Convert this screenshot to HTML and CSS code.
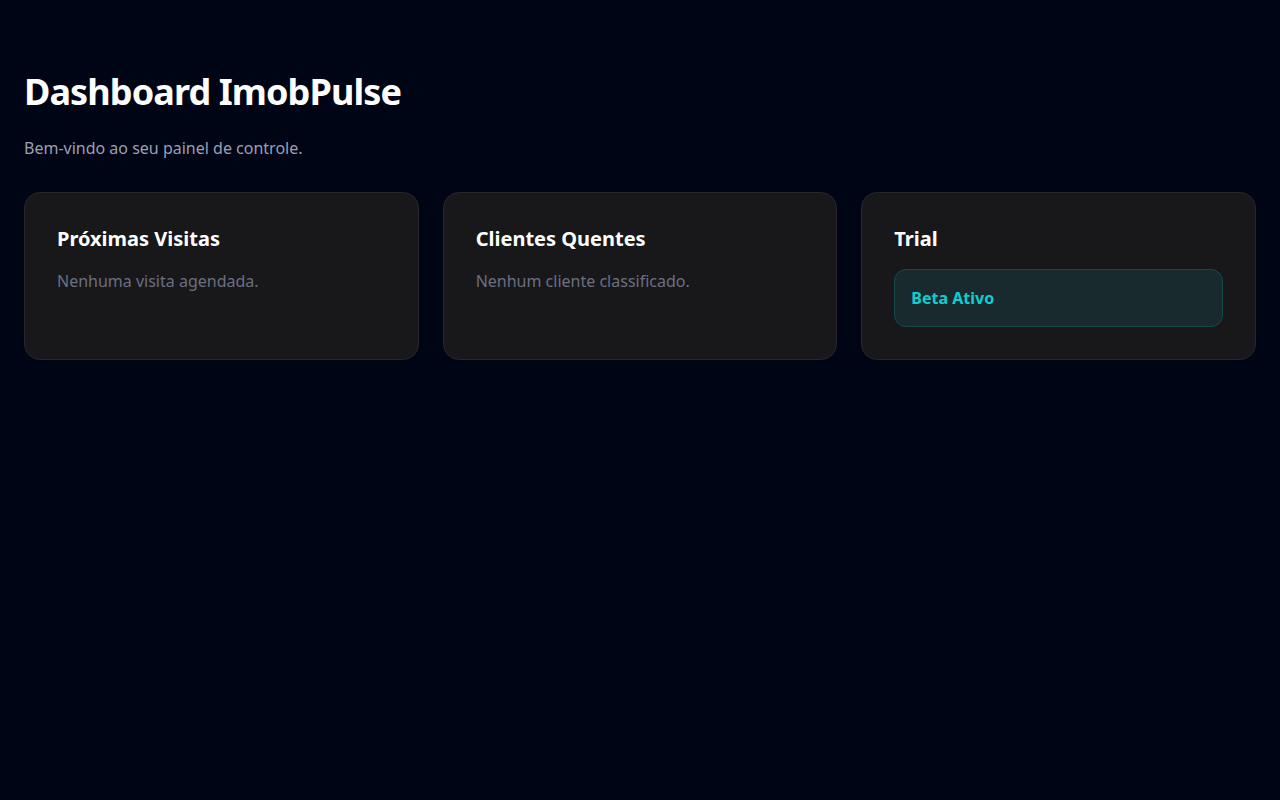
FILE: index.html
```html
<!DOCTYPE html>
<html lang="pt-BR">
<head>
<meta charset="utf-8">
<title>Dashboard ImobPulse</title>
<link rel="stylesheet" href="styles.css">
</head>
<body>
<main class="page">
  <h1 class="title">Dashboard ImobPulse</h1>
  <p class="subtitle">Bem-vindo ao seu painel de controle.</p>
  <section class="grid">
    <div class="card">
      <h2 class="card-title">Próximas Visitas</h2>
      <p class="card-text">Nenhuma visita agendada.</p>
    </div>
    <div class="card">
      <h2 class="card-title">Clientes Quentes</h2>
      <p class="card-text">Nenhum cliente classificado.</p>
    </div>
    <div class="card">
      <h2 class="card-title">Trial</h2>
      <div class="badge">Beta Ativo</div>
    </div>
  </section>
</main>
</body>
</html>
```
FILE: styles.css
```css
* { box-sizing: border-box; }
html, body {
  margin: 0;
  padding: 0;
  background: #000516;
  min-height: 100%;
}
body {
  font-family: "Noto Sans", "Open Sans", sans-serif;
  color: #ffffff;
}
.page {
  padding: 72px 24px 24px;
}
.title {
  margin: 0 0 24px;
  font-size: 36px;
  line-height: 40px;
  font-weight: 700;
  letter-spacing: -0.025em;
  color: #ffffff;
}
.subtitle {
  margin: 0 0 32px;
  font-size: 16px;
  line-height: 24px;
  color: #9d9fb2;
}
.grid {
  display: grid;
  grid-template-columns: repeat(3, 1fr);
  gap: 24px;
}
.card {
  background: #18181b;
  border: 1px solid #27272a;
  border-radius: 16px;
  padding: 32px;
}
.card-title {
  margin: 0 0 16px;
  font-size: 20px;
  line-height: 28px;
  font-weight: 700;
  color: #ffffff;
}
.card-text {
  margin: 0;
  font-size: 16px;
  line-height: 24px;
  color: #6b6f80;
}
.badge {
  background: #182a2e;
  border: 1px solid #124a4a;
  border-radius: 12px;
  padding: 16px;
  font-size: 16px;
  line-height: 24px;
  font-weight: 700;
  color: #0ccfd0;
}
```
